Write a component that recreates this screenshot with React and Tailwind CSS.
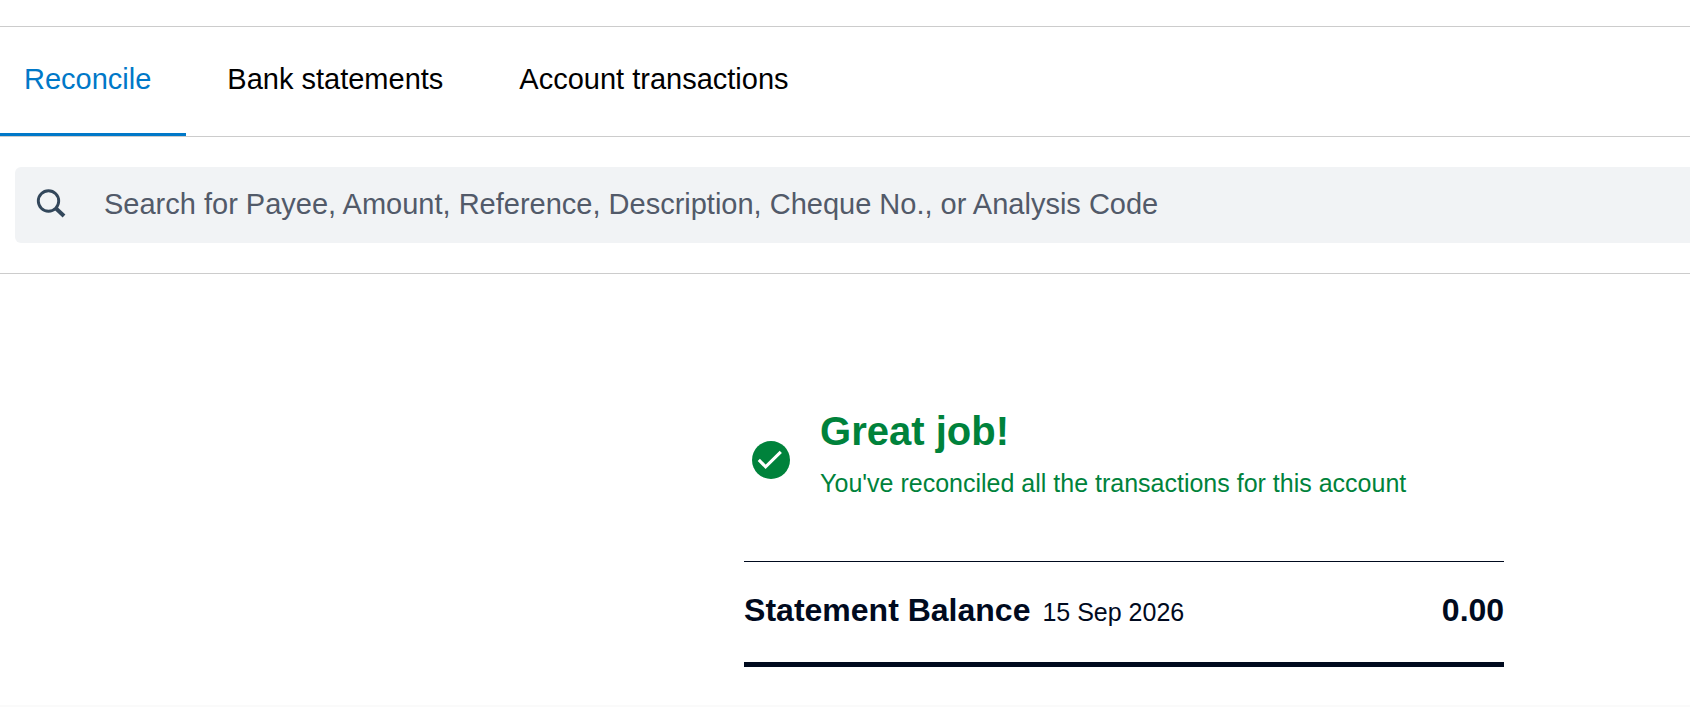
import { useState } from "react";

const tabs = ["Reconcile", "Bank statements", "Account transactions"];

export default function App() {
  const [activeTab, setActiveTab] = useState("Reconcile");
  const [search, setSearch] = useState("");

  return (
    <div className="flex min-h-screen flex-col bg-white font-['Liberation_Sans',Arial,sans-serif] text-black">

      {/* TABS */}
      <nav className="mt-[26px] flex overflow-hidden border-y border-[#cccccc]">
        {tabs.map((tab) => (
          <a
            key={tab}
            href="#"
            onClick={() => setActiveTab(tab)}
            className={`whitespace-nowrap border-b-[3px] pl-[41px] pr-[35px] pt-9 pb-[38px] text-[29px] leading-8 first:pl-6 ${
              activeTab === tab ? "border-[#0078c8] text-[#0078c8]" : "border-transparent"
            }`}
          >
            {tab}
          </a>
        ))}
      </nav>

      {/* SEARCH */}
      <section className="border-b border-[#cccccc] py-[30px] pl-[15px]">
        <label className="flex h-[76px] items-center rounded-l-md bg-[#f1f3f5] pl-5">
          <svg className="size-9 shrink-0" viewBox="0 0 36 36" fill="none" stroke="#33475b" aria-hidden="true">
            <circle cx="13.5" cy="14" r="10.2" strokeWidth="2.9" />
            <path d="M20.5 21 L29 29" strokeWidth="4" />
          </svg>
          <input
            type="text"
            aria-label="Search"
            value={search}
            onChange={(e) => setSearch(e.target.value)}
            placeholder="Search for Payee, Amount, Reference, Description, Cheque No., or Analysis Code"
            className="ml-[33px] min-w-0 flex-1 bg-transparent pb-0.5 text-[29px] leading-8 text-[#404756] outline-none placeholder:text-[#525a69]"
          />
        </label>
      </section>

      {/* RECONCILED MESSAGE + BALANCE */}
      <main className="mr-[11%] ml-auto w-full max-w-[760px] grow pt-[133px]">
        <div className="flex items-center gap-[30px] pl-2 text-[#00823b]">
          <svg className="size-[38px] shrink-0" viewBox="0 0 38 38" aria-hidden="true">
            <circle cx="19" cy="19" r="19" fill="currentColor" />
            <path d="M6.8 18.8 L13.6 25.8 L28.8 10.8" fill="none" stroke="#fff" strokeWidth="3.1" />
          </svg>
          <div className="pb-[14px]">
            <h1 className="text-[40px] font-bold leading-12">Great job!</h1>
            <p className="mt-3 text-[25px] leading-8">You've reconciled all the transactions for this account</p>
          </div>
        </div>

        <div className="mt-12 flex items-baseline justify-between border-t border-b-[5px] border-t-[#000a1e] border-b-[#000a1e] pt-7 pb-[30px] text-[#000a1e]">
          <div className="flex flex-wrap items-baseline gap-x-3">
            <h2 className="text-[32px] font-bold leading-10">Statement Balance</h2>
            <span className="text-[25px]">15 Sep 2026</span>
          </div>
          <span className="text-[32px] font-bold leading-10">0.00</span>
        </div>
      </main>

      <footer className="h-[2px] bg-[#fafafa]" />

    </div>
  );
}
